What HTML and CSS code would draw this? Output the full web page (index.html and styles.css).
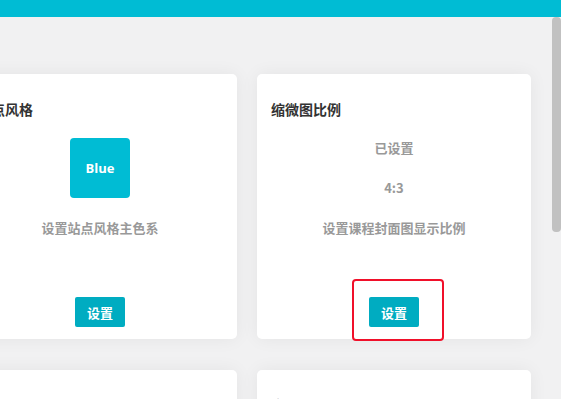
FILE: index.html
```html
<!DOCTYPE html>
<html lang="zh-CN">
<head>
<meta charset="utf-8">
<title>设置</title>
<link rel="stylesheet" href="styles.css">
</head>
<body>
<header class="topbar"></header>
<div class="scroller">
  <main class="grid">
    <section class="card">
      <h2 class="card-title">站点风格</h2>
      <div class="card-body">
        <div class="swatch">Blue</div>
        <p class="info">设置站点风格主色系</p>
      </div>
      <button class="btn">设置</button>
    </section>
    <section class="card">
      <h2 class="card-title">缩微图比例</h2>
      <div class="card-body">
        <p class="info">已设置</p>
        <p class="info">4:3</p>
        <p class="info">设置课程封面图显示比例</p>
      </div>
      <div class="btn-wrap">
        <button class="btn">设置</button>
        <span class="highlight"></span>
      </div>
    </section>
    <section class="card">
      <h2 class="card-title">首页推荐课程设置</h2>
    </section>
    <section class="card">
      <h2 class="card-title">音视频播放设置</h2>
    </section>
  </main>
  <div class="scroll-thumb"></div>
</div>
</body>
</html>
```
FILE: styles.css
```css
* { box-sizing: border-box; }
html, body { margin: 0; padding: 0; height: 100%; overflow: hidden; }
body {
  font-family: "Noto Sans CJK SC", "Noto Sans", sans-serif;
  background: #f1f1f2;
}
.topbar {
  height: 17px;
  background: #00bcd4;
}
.scroller {
  height: 382px;
  overflow: hidden;
}
.scroll-thumb {
  position: fixed;
  right: 0;
  top: 17px;
  width: 9px;
  height: 215px;
  background: #c1c1c1;
  border-radius: 4px;
}
.grid {
  display: grid;
  grid-template-columns: 274px 274px;
  column-gap: 20px;
  row-gap: 31px;
  padding: 57px 0 61px;
  margin-left: -37px;
}
.card {
  background: #fff;
  border-radius: 5px;
  height: 265px;
  padding: 0 14px;
  display: flex;
  flex-direction: column;
  box-shadow: 0 0 18px rgba(0, 0, 0, 0.06);
}
.card-title {
  margin: 25px 0 0;
  font-size: 14px;
  line-height: 20px;
  font-weight: 700;
  color: #333;
}
.card-body {
  margin-top: 19px;
  display: flex;
  flex-direction: column;
  align-items: center;
  gap: 20px;
}
.swatch {
  width: 60px;
  height: 60px;
  border-radius: 4px;
  background: #00bcd4;
  color: #fff;
  font-family: "Open Sans", "Noto Sans", sans-serif;
  font-weight: 700;
  font-size: 13px;
  display: flex;
  align-items: center;
  justify-content: center;
}
.info {
  margin: 0;
  font-size: 13px;
  line-height: 20px;
  font-weight: 700;
  color: #999;
}
.btn-wrap {
  margin: auto auto 12px;
  position: relative;
  display: flex;
}
.card > .btn { margin: auto auto 12px; }
.btn {
  width: 50px;
  height: 30px;
  border: 0;
  border-radius: 2px;
  background: #00acc1;
  color: #fff;
  font-family: "Noto Sans CJK SC", sans-serif;
  font-size: 13px;
  font-weight: 700;
  padding: 0;
}
.highlight {
  position: absolute;
  left: -17px;
  top: -18px;
  width: 92px;
  height: 62px;
  border: 2px solid #f0102a;
  border-radius: 4px;
}
```
